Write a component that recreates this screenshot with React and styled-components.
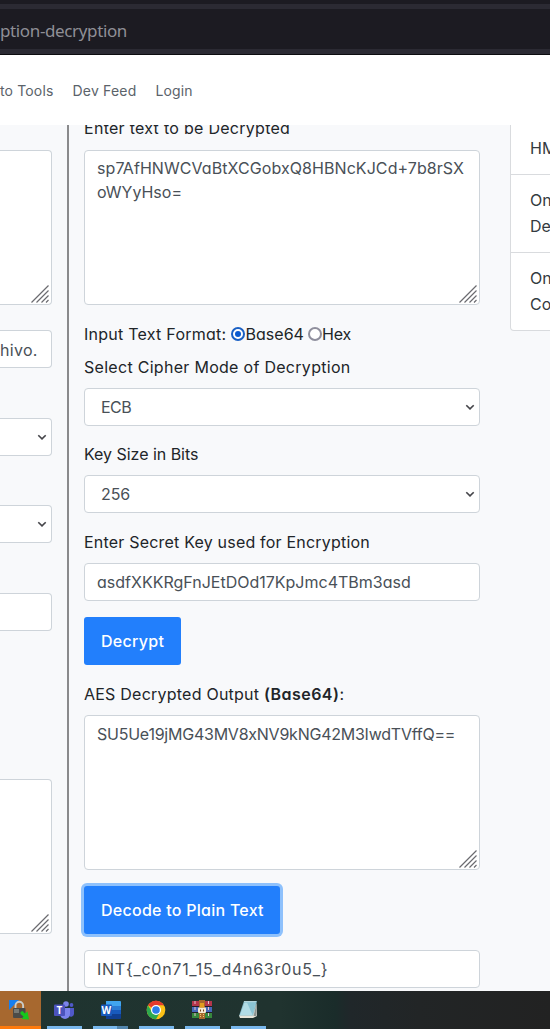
import React from "react";
import styled, { createGlobalStyle } from "styled-components";

const GlobalStyle = createGlobalStyle`
  *, *::before, *::after { box-sizing: border-box; }
  body {
    margin: 0;
    font-family: Inter, "Liberation Sans", sans-serif;
    font-size: 16px;
    line-height: 24px;
    font-feature-settings: "cv11";
    color: #212529;
    background: #f8f9fb;
  }
`;

const Screen = styled.div`
  width: 550px;
  height: 1029px;
  display: flex;
  flex-direction: column;
  overflow: hidden;
`;

const Text = styled.span`
  letter-spacing: ${(p) => p.$track || 0}px;
  white-space: nowrap;
`;

const TopStrip = styled.div`
  height: 9px;
  flex: none;
  background: #2b2a33;
  border-top: 4px solid #1c1b22;
`;

const AddressBar = styled.div`
  height: 46px;
  flex: none;
  display: flex;
  align-items: center;
  padding-bottom: 1px;
  background: #1c1b22;
  border-bottom: 1px solid #0c0c0f;
  box-shadow: inset 0 -5px #2b2a33;
  color: #8f8f96;
  font: 17px/24px "Noto Sans", sans-serif;
`;

const Nav = styled.nav`
  height: 70px;
  flex: none;
  display: flex;
  align-items: center;
  gap: 19px;
  padding-top: 2px;
  background: #fff;
  color: #5b636a;
  font-size: 14px;
`;

const Content = styled.main`
  height: 866px;
  flex: none;
  display: grid;
  grid-template-columns: 67px 428px 55px;
  overflow: hidden;
`;

const EncryptColumn = styled.section`
  display: flex;
  flex-direction: column;
  padding: 25px 15px 0 0;
`;

const DecryptColumn = styled.section`
  display: flex;
  flex-direction: column;
  align-items: stretch;
  border-left: 2px solid #8a8a8c;
  padding: 0 15px;
`;

const Sidebar = styled.aside`
  padding-left: 15px;
`;

const Label = styled.div`
  height: 24px;
  flex: none;
  margin-top: ${(p) => p.$top || 0}px;
  margin-bottom: ${(p) => p.$bottom ?? 9}px;
  white-space: pre;
`;

const Box = styled.div`
  flex: none;
  background: #fff;
  border: 1px solid #ced4da;
  border-radius: 4px;
  color: #495057;
  margin-top: ${(p) => p.$top || 0}px;
  ${(p) => p.$flushLeft && "border-left: 0; border-top-left-radius: 0; border-bottom-left-radius: 0;"}
`;

const Area = styled(Box)`
  height: 155px;
  padding: ${(p) => p.$inset ?? 6}px 2px 1px 12px;
  display: flex;
  flex-direction: column;
  justify-content: space-between;
`;

const Field = styled(Box)`
  height: 38px;
  display: flex;
  align-items: center;
  padding: 0 12px;
`;

const FileField = styled(Field)`
  padding: 2px 0 0;
`;

const SelectBox = styled(Field)`
  justify-content: space-between;
  padding: 0 4px 0 16px;
`;

const GripSvg = styled.svg`
  display: block;
  width: 18px;
  height: 18px;
  align-self: flex-end;
`;

const Chevron = styled.svg`
  display: block;
  width: 10px;
  height: 8px;
  margin-left: auto;
`;

const RadioRow = styled.div`
  height: 24px;
  flex: none;
  display: flex;
  align-items: center;
  margin-top: 17px;
  & > ${Text} { margin-top: -1px; }
`;

const Radio = styled.span`
  width: 14px;
  height: 14px;
  flex: none;
  display: grid;
  place-items: center;
  margin-left: ${(p) => p.$left}px;
  border: 2px solid ${(p) => (p.$on ? "#1a60c4" : "#8f8f9d")};
  border-radius: 50%;
  background: #fff;
  &::after {
    content: "";
    width: 6px;
    height: 6px;
    border-radius: 50%;
    background: ${(p) => (p.$on ? "#0b5bd0" : "transparent")};
  }
`;

const Button = styled.button`
  height: 48px;
  flex: none;
  align-self: flex-start;
  width: ${(p) => p.$width}px;
  margin: ${(p) => p.$top}px 0 0;
  padding: 0 0 1px 17px;
  border: 0;
  border-radius: 3px;
  background: #227ffc;
  color: #fff;
  font: inherit;
  font-weight: 500;
  text-align: left;
  box-shadow: ${(p) => (p.$focused ? "0 0 0 3px #8ec1fc" : "none")};
`;

const Strong = styled(Text)`
  font-weight: 600;
`;

const List = styled.div`
  width: 60px;
  height: 206px;
  background: #fff;
  border: 1px solid #d9dbde;
  border-top: 0;
  border-radius: 0 0 4px 4px;
`;

const ListItem = styled.div`
  padding: 12px 0 13px 19px;
  line-height: 26px;
  color: #343a40;
  &:first-child { padding-top: 10px; }
  & + & { border-top: 1px solid #d9dbde; }
`;

const Taskbar = styled.footer`
  height: 38px;
  flex: none;
  display: flex;
  gap: 11px;
  background: linear-gradient(90deg, #1f3430 0, #20332f 280px, #1a2c2a 335px, #20272a 350px, #222526 420px, #222 550px);
`;

const Task = styled.div`
  width: 35px;
  display: flex;
  flex-direction: column;
  align-items: center;
  justify-content: space-between;
  padding: 9px 1px 0 0;
  border-bottom: 3px solid #78b7ec;
`;

const StackedTask = styled(Task)`
  padding-right: 0;
  border-bottom: 0;
  &::after {
    content: "";
    align-self: stretch;
    height: 3px;
    background: linear-gradient(90deg, #78b7ec 24px, #5386ad 24px);
  }
`;

const ActiveTask = styled(Task)`
  width: 41px;
  margin-right: -5px;
  padding-right: 4px;
  background: #a7682f;
  border-bottom-color: #ff7a0c;
`;

const Icon = styled.svg`
  width: 20px;
  height: 20px;
  display: block;
`;

const Glyph = styled.text`
  font: 700 ${(p) => p.$size || 9}px "Open Sans", sans-serif;
  fill: #fff;
`;

const Grip = () => (
  <GripSvg viewBox="0 0 18 18">
    <path d="M.5 17.500 17.500.5M5.500 17.500l12-12M10.500 17.500l7-7M15 17.500l2.500-2.500" stroke="#6b6b70" strokeWidth="1.150" fill="none" />
  </GripSvg>
);

const Select = ({ children, track, top, flushLeft }) => (
  <SelectBox $top={top} $flushLeft={flushLeft}>
    {children && <Text $track={track}>{children}</Text>}
    <Chevron viewBox="0 0 10 8">
      <path d="M1.300 2.200 5 5.900 8.700 2.200" stroke="#45454a" strokeWidth="1.600" fill="none" />
    </Chevron>
  </SelectBox>
);

const LockIcon = () => (
  <Icon viewBox="0 0 20 20">
    <path d="M0 0h10L0 10z" fill="#167ff0" />
    <path d="M6.500 9V5.500a3.800 3.800 0 0 1 7.600 0V9" fill="none" stroke="#c9ccca" strokeWidth="1.900" />
    <rect x="4" y="8" width="12.500" height="10" rx="1" fill="#4b4b48" />
    <path d="M5 9h5v4H5z" fill="#777974" />
    <path d="m11.500 12 2-1 2.500 2.500 2.500-2L20 19.500l-7.500-.5 2-2.500-3-2.500z" fill="#16c81c" />
  </Icon>
);

const TeamsIcon = () => (
  <Icon viewBox="0 0 20 20">
    <circle cx="12" cy="4" r="2.800" fill="#7b83eb" />
    <circle cx="17.500" cy="5" r="1.900" fill="#5059c9" />
    <path d="M14 8h6v6a3 3 0 0 1-5 2z" fill="#5059c9" />
    <path d="M6 8h10v6a5 5 0 0 1-10 0z" fill="#7b83eb" />
    <rect x="0" y="4.500" width="11" height="11.500" rx="1" fill="#4b53bc" />
    <Glyph x="2.600" y="13.900" $size={10}>T</Glyph>
  </Icon>
);

const WordIcon = () => (
  <Icon viewBox="0 0 20 20">
    <path d="M5 1h14a1 1 0 0 1 1 1v4H5z" fill="#41a5ee" />
    <path d="M5 6h15v4H5z" fill="#2b7cd3" />
    <path d="M5 10h15v4H5z" fill="#185abd" />
    <path d="M5 14h15v4a1 1 0 0 1-1 1H5z" fill="#103f91" />
    <rect x="0" y="4.500" width="11" height="11.500" rx="1" fill="#185abd" />
    <Glyph x=".6" y="13.800" $size={10}>W</Glyph>
  </Icon>
);

const ChromeIcon = () => (
  <Icon viewBox="0 0 20 20">
    <circle cx="10" cy="10" r="9.300" fill="#fbc116" />
    <path d="M10 10 1.950 5.350A9.300 9.300 0 0 1 18.050 5.350H10z" fill="#e33b2e" />
    <path d="M1.950 5.350A9.300 9.300 0 0 0 10 19.300l4-7L10 14 6 12z" fill="#2da94f" />
    <circle cx="10" cy="10" r="5" fill="#fff" />
    <circle cx="10" cy="10" r="3.800" fill="#2b7de9" />
  </Icon>
);

const ArchiveIcon = () => (
  <Icon viewBox="0 0 20 20">
    <path d="M0 1h20v5H0z" fill="#b3364b" />
    <path d="M0 7h20v5H0z" fill="#4668b8" />
    <path d="M0 13h20v5H0z" fill="#36883c" />
    <path d="M0 6h20v1H0zM0 12h20v1H0z" fill="#231d28" />
    <path d="M3 1v17M16.500 1v17" stroke="#e3c1cd" strokeWidth="1" strokeDasharray="3 3" />
    <path d="M7 0h6v19H7z" fill="#a7672b" />
    <rect x="6" y="7.500" width="8" height="5.500" rx="1" fill="#f6ead1" />
    <path d="M8 3h4v4.500H8z" fill="#e29c20" />
    <path d="M8 9.500h1v2H8zM11 9.500h1v2h-1z" fill="#7a4520" />
    <path d="M8.500 14v4M11.500 14v4" stroke="#f0cb76" strokeDasharray="1 1" />
  </Icon>
);

const NotepadIcon = () => (
  <Icon viewBox="0 0 20 20">
    <path d="M6 1h13l-3.500 15H1z" fill="#84bac8" />
    <path d="M6.500 2.500h11L14.500 15H2z" fill="#b2dce5" />
    <path d="M9 2.500h8.500L14.500 15z" fill="#8bc4d3" />
    <path d="M1 15.500h14L18.500 3l.5 13-4 2H2z" fill="#e8e5d9" />
    <path d="M15.500 16 18.500 4v12z" fill="#8b9491" />
    <path d="M6.500 1.500h12" stroke="#e4eeee" strokeWidth="1.200" strokeDasharray="1 1" />
  </Icon>
);

export default function App() {
  return (
    <Screen>
      <GlobalStyle />
      <TopStrip />
      <AddressBar><Text $track={-0.37}>ption-decryption</Text></AddressBar>
      <Nav>
        <Text $track={0.15}>to Tools</Text>
        <Text $track={0.2}>Dev Feed</Text>
        <Text $track={0.1}>Login</Text>
      </Nav>
      <Content>
        <EncryptColumn>
          <Area $flushLeft><span /><Grip /></Area>
          <FileField $flushLeft $top={25}><Text $track={0.3}>hivo.</Text></FileField>
          <Select flushLeft top={50} />
          <Select flushLeft top={49} />
          <Field $flushLeft $top={50} />
          <Area $flushLeft $top={148}><span /><Grip /></Area>
        </EncryptColumn>
        <DecryptColumn>
          <Label $top={-9} $bottom={10}><Text $track={0.28}>Enter text to be Decrypted</Text></Label>
          <Area $inset={5}>
            <div>
              <Text $track={0.07}>sp7AfHNWCVaBtXCGobxQ8HBNcKJCd+7b8rSX</Text>
              <br />
              <Text>oWYyHso=</Text>
            </div>
            <Grip />
          </Area>
          <RadioRow>
            <Text $track={0.25}>Input Text Format:</Text>
            <Radio $on $left={5} />
            <Text $track={0.05}>Base64</Text>
            <Radio $left={4} />
            <Text $track={-0.2}>Hex</Text>
          </RadioRow>
          <Label $top={9}><Text $track={0.29}>Select Cipher Mode of Decryption</Text></Label>
          <Select track={-0.5}>ECB</Select>
          <Label $top={16}><Text $track={-0.03}>Key Size in Bits</Text></Label>
          <Select track={-0.1}>256</Select>
          <Label $top={17}><Text $track={0.2}>Enter Secret Key used for Encryption</Text></Label>
          <Field><Text>asdfXKKRgFnJEtDOd17KpJmc4TBm3asd</Text></Field>
          <Button $top={16} $width={97}><Text $track={0.3}>Decrypt</Text></Button>
          <Label $top={17}>
            <Text $track={0.23}>AES Decrypted Output </Text>
            <Strong $track={0.45}>(Base64)</Strong>:
          </Label>
          <Area>
            <Text $track={-0.24}>SU5Ue19jMG43MV8xNV9kNG42M3IwdTVffQ==</Text>
            <Grip />
          </Area>
          <Button $focused $top={16} $width={196}><Text $track={0.26}>Decode to Plain Text</Text></Button>
          <Field $top={16}><Text $track={0.73}>INT{"{"}_c0n71_15_d4n63r0u5_{"}"}</Text></Field>
        </DecryptColumn>
        <Sidebar>
          <List>
            <ListItem><Text>HM</Text></ListItem>
            <ListItem><Text>On</Text><br /><Text>De</Text></ListItem>
            <ListItem><Text>On</Text><br /><Text>Co</Text></ListItem>
          </List>
        </Sidebar>
      </Content>
      <Taskbar>
        <ActiveTask><LockIcon /></ActiveTask>
        <Task><TeamsIcon /></Task>
        <StackedTask><WordIcon /></StackedTask>
        <Task><ChromeIcon /></Task>
        <Task><ArchiveIcon /></Task>
        <Task><NotepadIcon /></Task>
      </Taskbar>
    </Screen>
  );
}
